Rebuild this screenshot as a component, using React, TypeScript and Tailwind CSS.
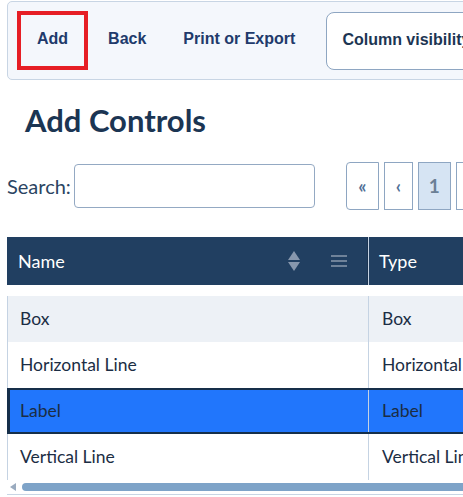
import React from 'react';

const rows = [
  { name: 'Box', type: 'Box', tone: 'striped' },
  { name: 'Horizontal Line', type: 'Horizontal Line', tone: 'plain' },
  { name: 'Label', type: 'Label', tone: 'selected' },
  { name: 'Vertical Line', type: 'Vertical Line', tone: 'plain' },
];

const toolbarFont = { fontFamily: '"Liberation Sans", Arial, sans-serif' };
const pageFont = { fontFamily: 'Lato, "Open Sans", sans-serif' };

const SortIcon = () => (
  <svg width="12" height="20" viewBox="0 0 12 20" className="shrink-0">
    <path d="M6 0 L12 9 L0 9 Z" fill="#8797ad" />
    <path d="M6 20 L12 11 L0 11 Z" fill="#8797ad" />
  </svg>
);

const MenuIcon = () => (
  <svg width="16" height="12" viewBox="0 0 16 12" className="shrink-0">
    <rect x="0" y="0" width="16" height="2" fill="#6f8299" />
    <rect x="0" y="5" width="16" height="2" fill="#6f8299" />
    <rect x="0" y="10" width="16" height="2" fill="#6f8299" />
  </svg>
);

const App: React.FC = () => {
  return (
    <div className="w-[463px] h-[497px] overflow-hidden bg-white" style={pageFont}>
      {/* button bar */}
      <div
        className="ml-[7px] mt-[1px] h-[79px] w-[700px] shrink-0 flex items-center pl-[9px] rounded-[5px] border border-[#c8d5e4] bg-[#f4f7fc]"
        style={toolbarFont}
      >
        <button className="h-[59px] px-[16px] pb-[3px] border-4 border-[#e61e25] text-[16px] font-bold text-[#213a6b]">
          Add
        </button>
        <button className="h-[59px] pb-[3px] pl-[20px] pr-[18px] text-[16px] font-bold text-[#213a6b]">Back</button>
        <button className="h-[59px] pb-[3px] px-[19px] text-[16px] font-bold text-[#213a6b]">Print or Export</button>
        <button className="ml-[12px] h-[58px] px-[15px] pb-[1px] rounded-[8px] border border-[#8ea6c2] bg-white text-[16px] font-bold text-[#1c3553] whitespace-nowrap">
          Column visibility
        </button>
      </div>

      <h1 className="mt-[22px] ml-[25px] text-[31px] leading-[37px] font-bold text-[#1b3553]">Add Controls</h1>

      {/* search and paging */}
      <div className="mt-[23px] flex items-center w-[700px]">
        <label className="ml-[7px] text-[20px] text-[#2b4462]">Search:</label>
        <input className="ml-[3px] w-[241px] h-[44px] rounded-[4px] border border-[#94a9c3] bg-white outline-none" />
        <div className="ml-[31px] flex items-center gap-[5px]">
          <div className="w-[33px] h-[48px] flex items-center justify-center rounded-l-[4px] border border-[#8ea6c2] text-[18px] font-bold text-[#4f6f96]">
            «
          </div>
          <div className="w-[29px] h-[48px] flex items-center justify-center border border-[#8ea6c2] text-[18px] font-bold text-[#4f6f96]">
            ‹
          </div>
          <div className="w-[33px] h-[48px] flex items-center justify-center border border-[#8ea6c2] bg-[#d6e4f3] text-[19px] font-bold text-[#6b7f95]">
            1
          </div>
          <div className="w-[33px] h-[48px] border border-[#8ea6c2]" />
        </div>
      </div>

      {/* grid */}
      <div className="mt-[27px] ml-[7px] w-[700px]">
        <div className="h-[48px] flex bg-[#213f61] text-white text-[18px]">
          <div className="w-[362px] flex items-center pl-[11px] border-r border-[#c5d3e3]">
            <span className="flex-1">Name</span>
            <SortIcon />
            <span className="w-[31px]" />
            <MenuIcon />
            <span className="w-[21px] h-full border-r border-[#1a3350]" />
          </div>
          <div className="flex-1 flex items-center pl-[10px]">Type</div>
        </div>

        <div className="h-[11px]" />

        {rows.map((row) => {
          const selected = row.tone === 'selected';
          const bg = selected ? 'bg-[#2176fc]' : row.tone === 'striped' ? 'bg-[#edf1f6]' : 'bg-white';
          return (
            <div
              key={row.name}
              className={`h-[46px] flex text-[17.5px] text-[#1b2d44] ${bg} ${
                selected ? 'border-2 border-[#162f4a] border-l-[3px]' : 'border-l border-[#c5d3e3]'
              }`}
            >
              <div
                className={`${selected ? 'w-[359px] pl-[10px]' : 'w-[361px] pl-[12px]'} flex items-center border-r border-[#c5d3e3]`}
              >
                {row.name}
              </div>
              <div className="flex-1 flex items-center pl-[13px] whitespace-nowrap">{row.type}</div>
            </div>
          );
        })}

        {/* horizontal scroller */}
        <div className="mt-[3px] h-[8px] flex items-center">
          <svg width="6" height="8" viewBox="0 0 6 8" className="ml-[3px]">
            <path d="M6 0 L0 4 L6 8 Z" fill="#9aabbf" />
          </svg>
          <div className="ml-[6px] h-[8px] flex-1 rounded-full bg-[#7ea3c8]" />
        </div>
        <div className="mt-[3px] h-px bg-[#c8d5e4]" />
      </div>
    </div>
  );
};

export default App;
